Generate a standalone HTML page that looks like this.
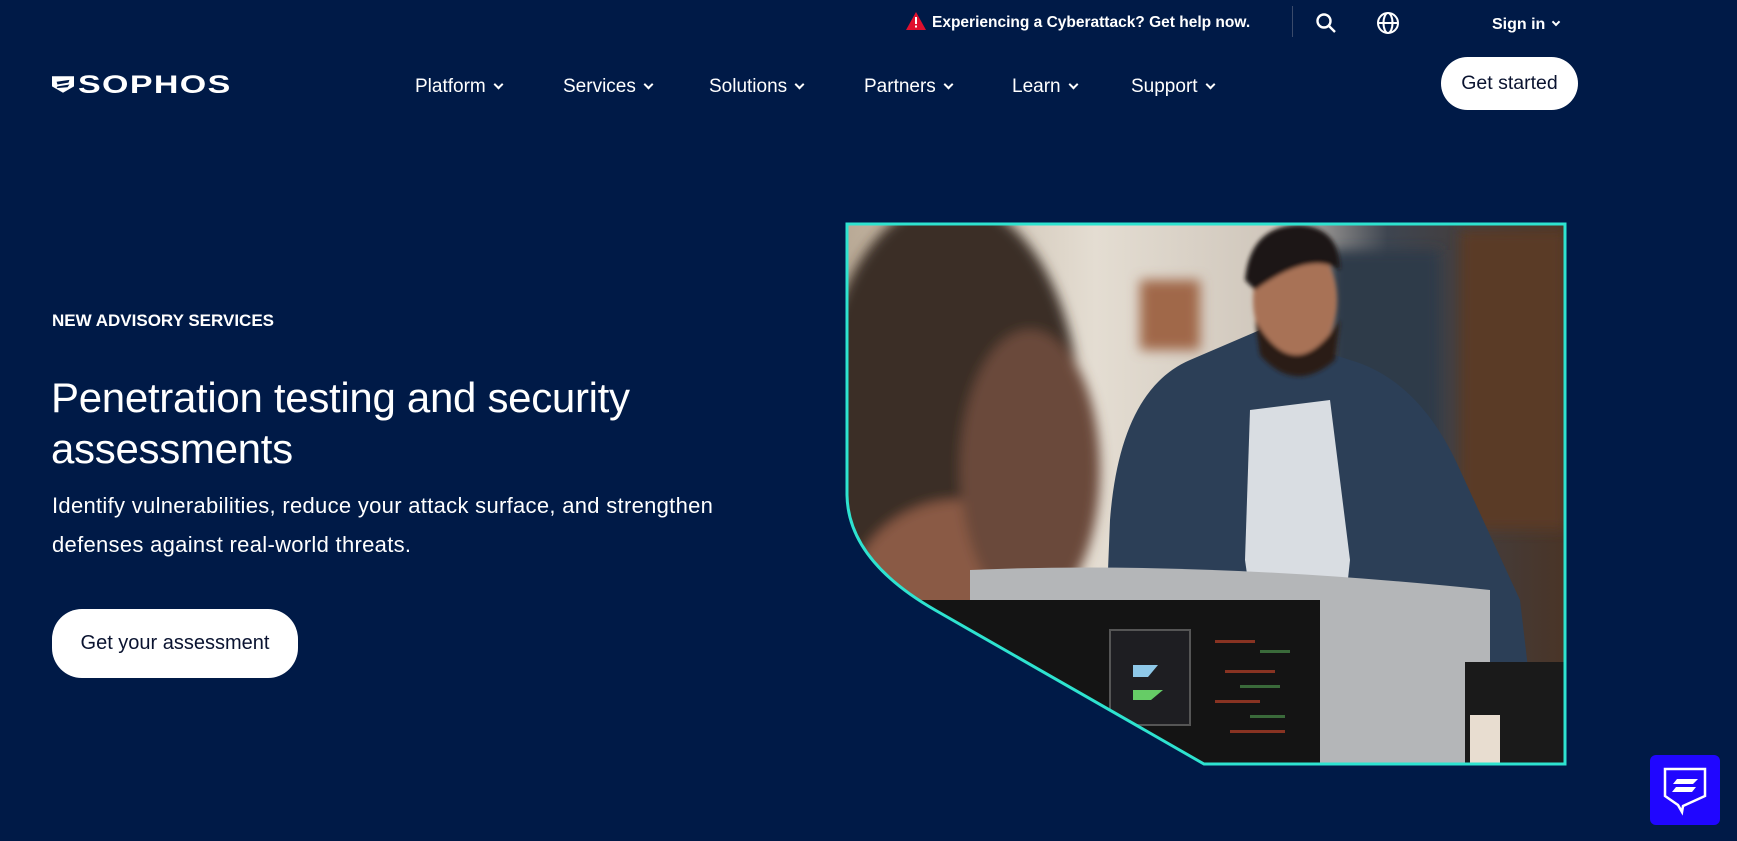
<!DOCTYPE html>
<html><head><meta charset="utf-8"><style>
*{margin:0;padding:0;box-sizing:border-box}
body{width:1737px;height:841px;background:#001a47;font-family:"Liberation Sans",sans-serif;color:#fff;position:relative;overflow:hidden}
.a{position:absolute;white-space:nowrap}
.nav{font-size:19px;top:76px}
.chev{display:inline-block;width:7px;height:7px;border-right:2px solid #fff;border-bottom:2px solid #fff;transform:rotate(45deg);margin-left:9px;position:relative;top:-4px}
.btn{background:#fff;color:#0a1330;border-radius:30px;display:flex;align-items:center;justify-content:center}
</style></head><body>
<!-- top bar -->
<svg class="a" style="left:906px;top:12px" width="20" height="18" viewBox="0 0 20 18"><path d="M10 0L20 18H0Z" fill="#e0102e"/><rect x="9" y="5" width="2" height="7" fill="#fff"/><rect x="9" y="13.5" width="2" height="2" fill="#fff"/></svg>
<div class="a" style="left:932px;top:14px;font-size:15.5px;font-weight:bold">Experiencing a Cyberattack? Get help now.</div>
<div class="a" style="left:1292px;top:6px;width:1px;height:31px;background:#3a4a6a"></div>
<svg class="a" style="left:1315px;top:12px" width="22" height="22" viewBox="0 0 22 22" fill="none" stroke="#fff" stroke-width="2.4"><circle cx="9" cy="9" r="6.5"/><path d="M14 14L20 20"/></svg>
<svg class="a" style="left:1376px;top:11px" width="24" height="24" viewBox="0 0 24 24" fill="none" stroke="#fff" stroke-width="2"><circle cx="12" cy="12" r="10"/><ellipse cx="12" cy="12" rx="4.5" ry="10"/><path d="M2 12H22"/></svg>
<div class="a" style="left:1492px;top:16px;font-size:16px;font-weight:bold">Sign in<span class="chev" style="width:6px;height:6px;margin-left:8px"></span></div>
<!-- logo -->
<svg class="a" style="left:52px;top:76px" width="22" height="17" viewBox="0 0 24 18"><path d="M0 0H24V11L12 18L0 11Z" fill="#fff"/><path d="M5 6L19 4L18 7L6 9ZM6 11L19 9L17 12L5 13Z" fill="#001a47"/></svg>
<div class="a" style="left:78px;top:71px;font-size:25px;font-weight:bold;letter-spacing:1px;transform:scaleX(1.36);transform-origin:left">SOPHOS</div>
<!-- nav -->
<div class="a nav" style="left:415px">Platform<span class="chev"></span></div>
<div class="a nav" style="left:563px">Services<span class="chev"></span></div>
<div class="a nav" style="left:709px">Solutions<span class="chev"></span></div>
<div class="a nav" style="left:864px">Partners<span class="chev"></span></div>
<div class="a nav" style="left:1012px">Learn<span class="chev"></span></div>
<div class="a nav" style="left:1131px">Support<span class="chev"></span></div>
<div class="a btn" style="left:1441px;top:57px;width:137px;height:53px;font-size:19.5px">Get started</div>
<!-- hero text -->
<div class="a" style="left:52px;top:311px;font-size:17px;font-weight:bold">NEW ADVISORY SERVICES</div>
<div class="a" style="left:51px;top:372px;font-size:42px;font-weight:300;line-height:51px;letter-spacing:-0.3px">Penetration testing and security<br>assessments</div>
<div class="a" style="left:52px;top:486px;font-size:22px;line-height:39px;letter-spacing:0.3px">Identify vulnerabilities, reduce your attack surface, and strengthen<br>defenses against real-world threats.</div>
<div class="a btn" style="left:52px;top:609px;width:246px;height:69px;font-size:20px">Get your assessment</div>
<!-- image -->
<svg class="a" style="left:0;top:0" width="1737" height="841" viewBox="0 0 1737 841">
<defs>
<clipPath id="c"><path d="M847 224H1565V764H1204L935 610Q848 560 847 495Z"/></clipPath>
<filter id="b"><feGaussianBlur stdDeviation="6"/></filter>
<filter id="b2"><feGaussianBlur stdDeviation="2"/></filter>
<linearGradient id="bg" x1="0" x2="1"><stop offset="0" stop-color="#b8a894"/><stop offset=".35" stop-color="#e4ddd2"/><stop offset=".6" stop-color="#cfc6bb"/><stop offset=".75" stop-color="#3e4550"/><stop offset="1" stop-color="#4a3426"/></linearGradient>
</defs>
<g clip-path="url(#c)">
<rect x="840" y="220" width="730" height="550" fill="url(#bg)"/>
<g filter="url(#b)">
<rect x="1140" y="280" width="60" height="70" fill="#a0684a"/>
<rect x="1460" y="230" width="105" height="300" fill="#5a3a28"/>
<rect x="1330" y="250" width="110" height="250" fill="#2f3a48"/>
<ellipse cx="950" cy="420" rx="130" ry="220" fill="#3b2e26"/>
<ellipse cx="960" cy="600" rx="110" ry="100" fill="#8a5a44"/>
<ellipse cx="1030" cy="470" rx="70" ry="140" fill="#6a4a3a"/>
</g>
<path d="M1100 770L1110 520Q1120 390 1190 360L1260 330L1350 360Q1420 380 1460 470L1520 600L1540 770Z" fill="#2c3f57"/>
<path d="M1250 410L1330 400L1350 560L1335 700H1265L1245 560Z" fill="#d9dde2"/>
<g filter="url(#b2)">
<ellipse cx="1295" cy="300" rx="42" ry="60" fill="#a87256"/>
<path d="M1255 320Q1295 390 1340 320L1335 360Q1295 395 1260 355Z" fill="#2a1e18"/>
<path d="M1245 280Q1250 225 1300 225Q1340 228 1340 270Q1310 250 1255 290Z" fill="#1c1612"/>
</g>
<path d="M970 570Q1200 560 1490 590V770H970Z" fill="#b4b6b8"/>
<rect x="900" y="600" width="420" height="170" fill="#141414"/>
<rect x="1110" y="630" width="80" height="95" fill="#1e1e22" stroke="#555" stroke-width="2"/>
<path d="M1133 665h25l-10 12h-15z" fill="#8ec8e8"/><path d="M1133 690h30l-12 10h-18z" fill="#66cc66"/>
<g fill="#883322"><rect x="1215" y="640" width="40" height="3"/><rect x="1225" y="670" width="50" height="3"/><rect x="1215" y="700" width="45" height="3"/><rect x="1230" y="730" width="55" height="3"/></g>
<g fill="#3a6a3a"><rect x="1260" y="650" width="30" height="3"/><rect x="1240" y="685" width="40" height="3"/><rect x="1250" y="715" width="35" height="3"/></g>
<rect x="1465" y="662" width="105" height="110" fill="#1a1a1a"/>
<rect x="1470" y="715" width="30" height="50" fill="#e8ddd0"/>
</g>
<path d="M847 224H1565V764H1204L935 610Q848 560 847 495Z" fill="none" stroke="#2ee3d0" stroke-width="3"/>
</svg>
<!-- chat -->
<div class="a" style="left:1650px;top:755px;width:70px;height:70px;background:#2006ff;border-radius:6px"></div>
<svg class="a" style="left:1656px;top:762px" width="58" height="56" viewBox="0 0 58 56"><path d="M9 7H49V34L27 44L26 50L22 43L9 34Z" fill="none" stroke="#fff" stroke-width="2.5"/><path d="M21 17H42L37 22H17Z M20 25H40L36 30H16Z" fill="#fff"/></svg>
</body></html>
